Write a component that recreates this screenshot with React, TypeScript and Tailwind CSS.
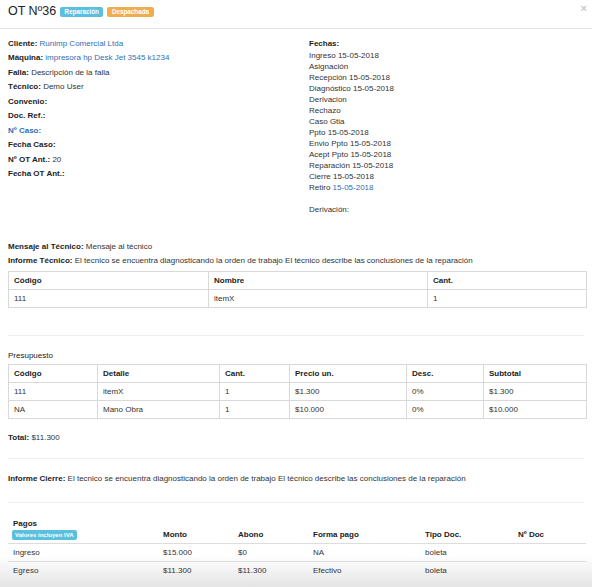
import React from 'react';

const link = 'text-[#2f6fb3]';

function Field({ label, children, blue }: { label: string; children?: React.ReactNode; blue?: boolean }) {
  return (
    <div>
      <span className={`font-bold ${blue ? link : 'text-[#222]'}`}>{label}</span>
      {children ? <> {children}</> : null}
    </div>
  );
}

const fechas: [string, string?, boolean?][] = [
  ['Ingreso', '15-05-2018'],
  ['Asignación'],
  ['Recepción', '15-05-2018'],
  ['Diagnóstico', '15-05-2018'],
  ['Derivacion'],
  ['Rechazo'],
  ['Caso Gtia'],
  ['Ppto', '15-05-2018'],
  ['Envio Ppto', '15-05-2018'],
  ['Acept Ppto', '15-05-2018'],
  ['Reparación', '15-05-2018'],
  ['Cierre', '15-05-2018'],
  ['Retiro', '15-05-2018', true],
];

function Grid({ widths, head, rows }: { widths: string[]; head: string[]; rows: string[][] }) {
  return (
    <table className="w-[578px] border-collapse border border-[#d9d9d9] table-fixed">
      <colgroup>
        {widths.map((w, i) => (
          <col key={i} className={w} />
        ))}
      </colgroup>
      <thead>
        <tr className="h-[18px]">
          {head.map((h) => (
            <th key={h} className="border border-[#d9d9d9] px-[5px] text-left font-bold text-[#222]">
              {h}
            </th>
          ))}
        </tr>
      </thead>
      <tbody>
        {rows.map((r, i) => (
          <tr key={i} className="h-[18px]">
            {r.map((c, j) => (
              <td key={j} className="border border-[#d9d9d9] px-[5px]">
                {c}
              </td>
            ))}
          </tr>
        ))}
      </tbody>
    </table>
  );
}

export default function App() {
  return (
    <div className="relative w-[592px] h-[587px] overflow-hidden bg-white font-['Liberation_Sans',Arial,sans-serif] text-[8px] leading-[11px] text-[#333]">
      {/* bottom fade of the scroll area, under the content */}
      <div className="pointer-events-none absolute left-0 right-0 bottom-0 h-[32px] bg-gradient-to-b from-[#ffffff00] to-[#e4e4e4]" />

      {/* Header */}
      <header className="relative h-[29px] border-b border-[#e5e5e5] px-2 flex items-start pt-[4px]">
        <h4 className="text-[12.5px] leading-[15px] text-[#222]">OT Nº36</h4>
        <span className="ml-[4px] mt-[3px] h-[10px] px-[4.5px] rounded-[2px] bg-[#5bc0de] text-white font-bold text-[6.3px] leading-[10px]">
          Reparación
        </span>
        <span className="ml-[4px] mt-[3px] h-[10px] px-[4.5px] rounded-[2px] bg-[#f0ad4e] text-white font-bold text-[6.3px] leading-[10px]">
          Despachada
        </span>
        <span className="ml-auto -mt-[2px] -mr-[3px] text-[11px] leading-[12px] font-bold text-[#c8c8c8]">×</span>
      </header>

      <main className="relative px-2">
        {/* Datos + Fechas */}
        <div className="flex pt-[8px]">
          <div className="w-[301px] leading-[14.45px]">
            <Field label="Cliente:">
              <span className={link}>Runimp Comercial Ltda</span>
            </Field>
            <Field label="Máquina:">
              <span className={link}>impresora hp Desk Jet 3545 k1234</span>
            </Field>
            <Field label="Falla:">Descripción de la falla</Field>
            <Field label="Técnico:">Demo User</Field>
            <Field label="Convenio:" />
            <Field label="Doc. Ref.:" />
            <Field label="Nº Caso:" blue />
            <Field label="Fecha Caso:" />
            <Field label="Nº OT Ant.:">20</Field>
            <Field label="Fecha OT Ant.:" />
          </div>
          <div className="flex-1 pt-[0.5px]">
            <div className="font-bold text-[#222] mb-[1px]">Fechas:</div>
            {fechas.map(([k, d, b]) => (
              <div key={k}>
                {k}
                {d ? <> <span className={b ? link : ''}>{d}</span></> : null}
              </div>
            ))}
            <div className="mt-[11px]">Derivación:</div>
          </div>
        </div>

        {/* Mensajes */}
        <div className="mt-[25px] leading-[14.5px]">
          <div>
            <span className="font-bold text-[#222]">Mensaje al Técnico:</span> Mensaje al técnico
          </div>
          <div>
            <span className="font-bold text-[#222]">Informe Técnico:</span> El tecnico se encuentra diagnosticando la orden de trabajo El técnico describe las conclusiones de la reparación
          </div>
        </div>
        <div className="mt-[2px]">
          <Grid widths={['w-[200px]', 'w-[219px]', 'w-[159px]']} head={['Código', 'Nombre', 'Cant.']} rows={[['111', 'itemX', '1']]} />
        </div>

        <hr className="mt-[27px] border-t border-[#eeeeee]" />

        {/* Presupuesto */}
        <div className="mt-[14px] text-[#222]">Presupuesto</div>
        <div className="mt-[3px]">
          <Grid
            widths={['w-[89px]', 'w-[122px]', 'w-[70px]', 'w-[117px]', 'w-[77px]', 'w-[103px]']}
            head={['Código', 'Detalle', 'Cant.', 'Precio un.', 'Desc.', 'Subtotal']}
            rows={[
              ['111', 'itemX', '1', '$1.300', '0%', '$1.300'],
              ['NA', 'Mano Obra', '1', '$10.000', '0%', '$10.000'],
            ]}
          />
        </div>
        <div className="mt-[13px]">
          <span className="font-bold text-[#222]">Total:</span> $11.300
        </div>

        <hr className="mt-[15px] border-t border-[#eeeeee]" />
        <div className="mt-[14px]">
          <span className="font-bold text-[#222]">Informe Cierre:</span> El tecnico se encuentra diagnosticando la orden de trabajo El técnico describe las conclusiones de la reparación
        </div>
        <hr className="mt-[18.5px] border-t border-[#eeeeee]" />

        {/* Pagos */}
        <table className="mt-[15px] w-[578px] border-collapse table-fixed">
          <colgroup>
            <col className="w-[150px]" />
            <col className="w-[75px]" />
            <col className="w-[75px]" />
            <col className="w-[112px]" />
            <col className="w-[93px]" />
            <col className="w-[73px]" />
          </colgroup>
          <thead>
            <tr className="border-b border-[#dddddd]">
              <th className="px-[4px] pb-[3px] text-left align-bottom font-bold text-[#222]">
                <div className="leading-[11px] pl-[1px]">Pagos</div>
                <span className="inline-block h-[10px] px-[3px] rounded-[2px] bg-[#5bc0de] text-white font-bold text-[6px] leading-[10px]">
                  Valores incluyen IVA
                </span>
              </th>
              {['Monto', 'Abono', 'Forma pago', 'Tipo Doc.', 'Nº Doc'].map((h) => (
                <th key={h} className="px-[5px] pb-[3px] text-left align-bottom font-bold text-[#222] leading-[10px]">
                  {h}
                </th>
              ))}
            </tr>
          </thead>
          <tbody>
            {[
              ['Ingreso', '$15.000', '$0', 'NA', 'boleta', ''],
              ['Egreso', '$11.300', '$11.300', 'Efectivo', 'boleta', ''],
            ].map((r, i) => (
              <tr key={i} className={`h-[18px] ${i === 0 ? 'border-b border-[#dddddd]' : ''}`}>
                {r.map((c, j) => (
                  <td key={j} className="px-[5px]">
                    {c}
                  </td>
                ))}
              </tr>
            ))}
          </tbody>
        </table>
      </main>
    </div>
  );
}
